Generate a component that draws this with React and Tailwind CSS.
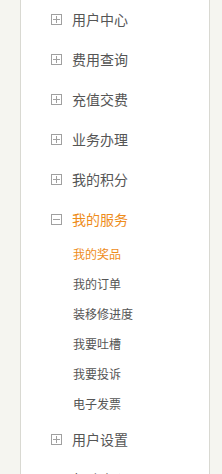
import React from 'react';

const menus = [
  { name: '用户中心' },
  { name: '费用查询' },
  { name: '充值交费' },
  { name: '业务办理' },
  { name: '我的积分' },
  {
    name: '我的服务',
    open: true,
    children: ['我的奖品', '我的订单', '装移修进度', '我要吐槽', '我要投诉', '电子发票'],
  },
  { name: '用户设置' },
  { name: '帮助中心' },
];

const BoxIcon = ({ open }) => (
  <svg width="11" height="11" viewBox="0 0 11 11" className="shrink-0">
    <rect x="0.5" y="0.5" width="10" height="10" fill="none" stroke="#a0a0a0" />
    <line x1="2" y1="5.5" x2="9" y2="5.5" stroke="#a0a0a0" />
    {!open && <line x1="5.5" y1="2" x2="5.5" y2="9" stroke="#a0a0a0" />}
  </svg>
);

export default function App() {
  return (
    <div
      className="h-[474px] w-[222px] overflow-hidden bg-[#f5f5f0] pl-[20px]"
      style={{ fontFamily: '"Noto Sans CJK SC", "Noto Sans", sans-serif' }}
    >
      <div className="mt-[-1px] h-[480px] w-[190px] border-x border-[#d9d9d2] bg-white">
        {menus.map((m) => (
          <div key={m.name}>
            <div className="flex h-[40px] items-center pl-[30px]">
              <BoxIcon open={m.open} />
              <span
                className={`ml-[10px] text-[14px] leading-none ${
                  m.open ? 'text-[#ee8c1a]' : 'text-[#555]'
                }`}
              >
                {m.name}
              </span>
            </div>
            {m.open && (
              <div>
                {m.children.map((c, i) => (
                  <div
                    key={c}
                    className={`flex h-[30px] items-center pl-[52px] text-[12px] leading-none ${
                      i === 0 ? 'text-[#ee8c1a]' : 'text-[#555]'
                    }`}
                  >
                    {c}
                  </div>
                ))}
              </div>
            )}
          </div>
        ))}
      </div>
    </div>
  );
}
